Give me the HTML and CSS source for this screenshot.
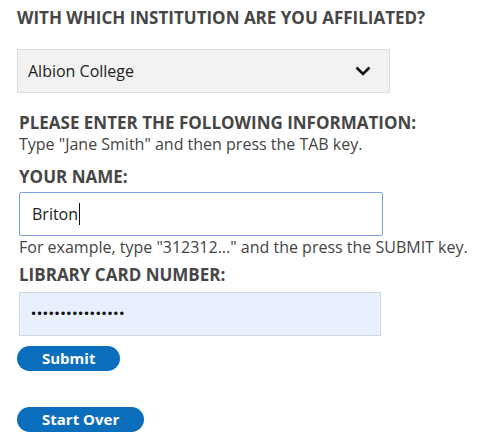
FILE: index.html
```html
<!DOCTYPE html>
<html lang="en">
<head>
<meta charset="utf-8">
<title>Library Login</title>
<link rel="stylesheet" href="styles.css">
</head>
<body>
<form class="login">
  <h2 class="heading">WITH WHICH INSTITUTION ARE YOU AFFILIATED?</h2>
  <div class="select">
    <span class="select-value">Albion College</span>
    <svg class="chevron" width="16" height="10" viewBox="0 0 16 10"><path d="M1.5 1.5 L8 8 L14.5 1.5" fill="none" stroke="#111" stroke-width="2.6"/></svg>
  </div>
  <div class="fields">
    <h2 class="heading section">PLEASE ENTER THE FOLLOWING INFORMATION:</h2>
    <p class="hint">Type "Jane Smith" and then press the TAB key.</p>
    <h2 class="heading label-name">YOUR NAME:</h2>
    <div class="input name"><span>Briton</span><span class="caret"></span></div>
    <p class="hint">For example, type "312312..." and the press the SUBMIT key.</p>
    <h2 class="heading label-card">LIBRARY CARD NUMBER:</h2>
    <div class="input card"><span class="dots">••••••••••••••••</span></div>
  </div>
  <button type="button" class="btn submit">Submit</button>
  <button type="button" class="btn over">Start Over</button>
</form>
</body>
</html>
```
FILE: styles.css
```css
html, body {
  margin: 0;
  padding: 0;
  background: #fff;
}
body {
  font-family: "Open Sans", "DejaVu Sans", sans-serif;
  color: #444;
}
.login {
  display: flex;
  flex-direction: column;
  align-items: flex-start;
  padding: 8px 0 0 17px;
}
.heading {
  margin: 0;
  font-size: 17px;
  font-weight: 700;
  line-height: 20px;
  color: #464646;
}
.select {
  margin-top: 21px;
  box-sizing: border-box;
  width: 373px;
  height: 44px;
  background: #f2f2f2;
  border: 1px solid #dcdcdc;
  display: flex;
  align-items: center;
  justify-content: space-between;
  padding: 0 18px 0 10px;
}
.select-value {
  font-size: 16px;
  color: #222;
}
.chevron {
  display: block;
}
.fields {
  padding-left: 2px;
  display: flex;
  flex-direction: column;
  align-items: flex-start;
}
.section {
  margin-top: 20px;
}
.hint {
  margin: 0;
  font-size: 16px;
  line-height: 22px;
  color: #444;
}
.label-name {
  margin-top: 12px;
}
.label-card {
  margin-top: 7px;
}
.input {
  box-sizing: border-box;
  height: 44px;
  display: flex;
  align-items: center;
  font-size: 16px;
  color: #222;
}
.name {
  margin-top: 5px;
  width: 364px;
  padding-left: 12px;
  border: 1px solid #7b9fe0;
  border-radius: 2px;
  background: #fff;
}
.caret {
  display: inline-block;
  width: 1px;
  height: 22px;
  background: #111;
  margin-left: 1px;
}
.card {
  margin-top: 7px;
  width: 362px;
  padding-left: 10px;
  background: #e8f0fe;
  border: 1px solid #cfd6e0;
}
.dots {
  font-family: "DejaVu Sans", sans-serif;
  font-size: 12px;
  letter-spacing: -1.2px;
  color: #111;
}
.btn {
  font-family: "Open Sans", "DejaVu Sans", sans-serif;
  font-weight: 700;
  font-size: 15px;
  color: #fff;
  background: #0a6ebd;
  border: none;
  border-radius: 13px;
  height: 25px;
  padding: 0 25px;
  line-height: 25px;
  margin: 0;
}
.submit {
  margin-top: 10px;
}
.over {
  margin-top: 36px;
}
```
